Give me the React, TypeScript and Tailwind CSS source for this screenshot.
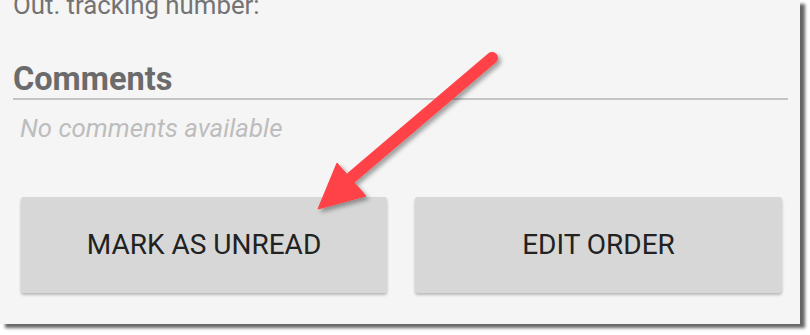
import React from "react";

export default function App() {
  return (
    <div className="relative w-[810px] h-[335px] bg-white overflow-hidden" style={{ fontFamily: "Roboto, 'Liberation Sans', sans-serif" }}>
      <div className="w-[800px] h-[324px] bg-[#f5f5f5] pl-[13px] pr-[12px] shadow-[5px_4px_3px_rgba(0,0,0,0.6)] overflow-hidden">
        <p className="mt-[-10px] text-[25.8px] leading-[30px] text-[#737373]">Out. tracking number:</p>
        <h2 className="mt-[40px] text-[32.5px] leading-[38px] font-bold text-[#6b6b6b] border-b-2 border-[#c4c4c4]">Comments</h2>
        <p className="mt-[13px] pl-[7px] text-[25.8px] leading-[30px] italic text-[#bdbdbd]">No comments available</p>
        <div className="mt-[54px] ml-[8px] flex gap-[28px]">
          <button className="w-[366px] h-[96px] rounded-[3px] bg-[#d6d7d6] text-[28px] text-[#222222] shadow-[0_2px_3px_rgba(0,0,0,0.25)]">MARK AS UNREAD</button>
          <button className="w-[367px] h-[96px] rounded-[3px] bg-[#d6d7d6] text-[28px] text-[#222222] shadow-[0_2px_3px_rgba(0,0,0,0.25)]">EDIT ORDER</button>
        </div>
      </div>
      <svg className="absolute left-0 top-0 pointer-events-none" width="810" height="335" viewBox="0 0 810 335">
        <defs>
          <filter id="ash" x="-20%" y="-20%" width="140%" height="140%">
            <feDropShadow dx="3" dy="3" stdDeviation="2" floodColor="#000" floodOpacity="0.35" />
          </filter>
        </defs>
        <g filter="url(#ash)">
          <line x1="492" y1="58" x2="352" y2="177" stroke="#ff4246" strokeWidth="12" strokeLinecap="round" />
          <polygon points="318,209 337,163 366,196" fill="#ff4246" stroke="#ff4246" strokeWidth="1" strokeLinejoin="round" />
        </g>
      </svg>
    </div>
  );
}
